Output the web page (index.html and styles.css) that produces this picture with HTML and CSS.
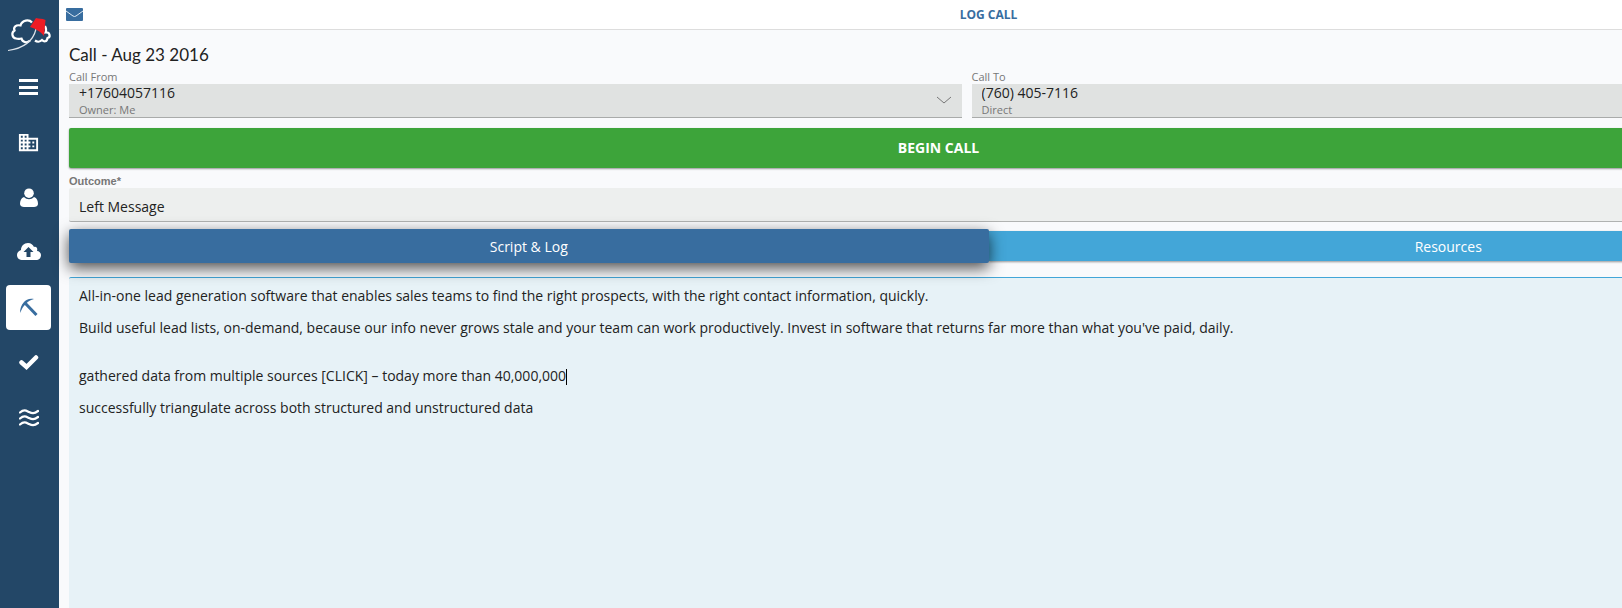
FILE: index.html
```html
<!DOCTYPE html>
<html lang="en">
<head>
    <meta charset="UTF-8">
    <meta name="viewport" content="width=device-width, initial-scale=1.0">
    <title>Log Call</title>
    <link rel="stylesheet" href="styles.css">
</head>
<body>
    <div class="app">
        <nav class="sidebar">
            <a class="logo" href="#" aria-label="Home">
                <svg width="44" height="36" viewBox="0 0 44 36">
                    <path d="M24 5.500C21 2 14 3 12.500 8.500C8 7.500 5 10 6.500 13.500C3 15.500 4 21 8 21.500C11 22.500 12 21.500 13.500 21.500C14.500 25.500 19 26.500 22 23.500" fill="none" stroke="#fff" stroke-width="2.200"/>
                    <path d="M37 9C38.500 12 38.500 13.500 37.500 15.500C42 15 43 20 39.500 21C39 25 36 25 34 23C32 25 29 25 27 23.500" fill="none" stroke="#fff" stroke-width="2.200"/>
                    <path d="M0 33.500C14 31.500 25 25 28 12" fill="none" stroke="#dfe5eb" stroke-width="1.200"/>
                    <path d="M28 1C31 2 34 1 37.500 3L36 19C32 14 28 12 22 10Z" fill="#ee1c25"/>
                </svg>
            </a>
            <a class="nav-item" href="#" aria-label="Menu">
                <svg width="19" height="18" viewBox="0 0 19 18" fill="#fff"><path d="M0 0h19v3H0zM0 7h19v3H0zM0 13h19v3H0z"/></svg>
            </a>
            <a class="nav-item" href="#" aria-label="Companies">
                <svg width="23" height="23" viewBox="0 0 24 24" fill="#fff"><path d="M12 7V3H2v18h20V7H12zM6 19H4v-2h2v2zm0-4H4v-2h2v2zm0-4H4V9h2v2zm0-4H4V5h2v2zm4 12H8v-2h2v2zm0-4H8v-2h2v2zm0-4H8V9h2v2zm0-4H8V5h2v2zm10 12h-8v-2h2v-2h-2v-2h2v-2h-2V9h8v10zm-2-8h-2v2h2v-2zm0 4h-2v2h2v-2z"/></svg>
            </a>
            <a class="nav-item" href="#" aria-label="Contacts">
                <svg width="18" height="20" viewBox="0 0 18 20" fill="#fff"><circle cx="9" cy="5.200" r="4.800"/><path d="M4 9C1 10 0 13 0 16C0 18 2 19 4 19H14C16 19 18 18 18 16C18 13 17 10 14 9C11 12 7 12 4 9Z"/></svg>
            </a>
            <a class="nav-item" href="#" aria-label="Upload">
                <svg width="24" height="19" viewBox="0 0 24 19"><path d="M6 17C2 17 0 15 0 12C0 10 1 8 4 7C4 3 7 0 11 0C14 0 16 2 17 4C19 3 21 5 20 8C22 8 24 10 24 12C24 15 22 17 19 17Z" fill="#fff"/><path d="M11.500 4L6.500 9H9.500V14H13.500V9H16.500Z" fill="#234767"/></svg>
            </a>
            <a class="nav-item active" href="#" aria-label="Prospecting">
                <svg width="20" height="20" viewBox="0 0 20 20"><path d="M15 1C10 0 7 2 5 4C2 7 1 11 1 15C3 11 4 8 7 6C9 3 12 2 15 1Z" fill="#386d9f"/><path d="M6 5L17.500 17" stroke="#386d9f" stroke-width="3"/></svg>
            </a>
            <a class="nav-item" href="#" aria-label="Tasks">
                <svg width="20" height="16" viewBox="0 0 20 16"><path d="M2.500 7.500L7.500 12L17 2.500" fill="none" stroke="#fff" stroke-width="4.500" stroke-linecap="round"/></svg>
            </a>
            <a class="nav-item" href="#" aria-label="Streams">
                <svg width="20" height="18" viewBox="0 0 20 18" fill="none" stroke="#fff" stroke-width="2.300" stroke-linecap="round"><path d="M1 3.500C5 0 7 1.500 10 3S15 5 19 2M1 9.500C5 6 7 7.500 10 9S15 11 19 8M1 15.500C5 12 7 13.500 10 15S15 17 19 14"/></svg>
            </a>
        </nav>

        <main class="main">
            <header class="topbar">
                <a class="mail" href="#" aria-label="Mail">
                    <svg width="17" height="13" viewBox="0 0 17 13"><rect width="17" height="13" rx="1" fill="#386d9f"/><path d="M0 3L7 8Q8.500 9 10 8L17 3" fill="none" stroke="#dfeaf4" stroke-width="1"/></svg>
                </a>
                <h1>LOG CALL</h1>
            </header>

            <form class="call-form">
                <h2>Call - Aug 23 2016</h2>

                <div class="numbers">
                    <div class="field">
                        <label for="call-from">Call From</label>
                        <div class="box">
                            <select id="call-from" name="call_from">
                                <option>+17604057116</option>
                            </select>
                            <small>Owner: Me</small>
                            <svg class="chevron" width="16" height="8" viewBox="0 0 16 8"><path d="M1 1L8 7L15 1" fill="none" stroke="#777" stroke-width="1"/></svg>
                        </div>
                    </div>
                    <div class="field">
                        <label for="call-to">Call To</label>
                        <div class="box">
                            <select id="call-to" name="call_to">
                                <option>(760) 405-7116</option>
                            </select>
                            <small>Direct</small>
                        </div>
                    </div>
                </div>

                <button type="button" class="begin">BEGIN CALL</button>

                <label class="outcome-label" for="outcome">Outcome*</label>
                <select class="outcome" id="outcome" name="outcome">
                    <option>Left Message</option>
                </select>

                <div class="tabs">
                    <button type="button" class="tab selected">Script &amp; Log</button>
                    <button type="button" class="tab">Resources</button>
                </div>

                <div class="script">
                    <textarea aria-label="Script &amp; Log" name="script">All-in-one lead generation software that enables sales teams to find the right prospects, with the right contact information, quickly.

Build useful lead lists, on-demand, because our info never grows stale and your team can work productively. Invest in software that returns far more than what you've paid, daily.


gathered data from multiple sources [CLICK] – today more than 40,000,000

successfully triangulate across both structured and unstructured data</textarea>
                    <span class="caret"></span>
                </div>
            </form>
        </main>
    </div>
</body>
</html>
```
FILE: styles.css
```css
* {
    box-sizing: border-box;
}
body {
    margin: 0;
    overflow: hidden;
    font-family: "Open Sans", sans-serif;
    font-size: 14px;
    color: #222;
    background-color: #f9fafc;
}
/* the workspace runs on past the right edge of the window */
.app {
    display: flex;
    width: calc(100vw + 296px);
    height: 100vh;
}
.sidebar {
    display: flex;
    flex-direction: column;
    align-items: center;
    gap: 10px;
    width: 59px;
    padding: 17px 8px 0 6px;
    background-color: #234767;
}
.logo {
    height: 38px;
    padding-left: 2px;
}
.logo svg,
.nav-item svg,
.mail svg {
    display: block;
}
.nav-item {
    display: flex;
    justify-content: center;
    align-items: center;
    width: 45px;
    height: 45px;
    border-radius: 4px;
}
.nav-item.active {
    background-color: #fff;
}
.main {
    display: flex;
    flex-direction: column;
    flex: 1;
}
.topbar {
    display: flex;
    align-items: center;
    height: 30px;
    padding: 0 7px;
    background-color: #fff;
    border-bottom: 1px solid #ddd;
}
.topbar h1 {
    flex: 1;
    margin: 0 17px 0 0;
    font-size: 12px;
    line-height: 16px;
    text-align: center;
    color: #386d9f;
}
.call-form {
    display: flex;
    flex-direction: column;
    flex: 1;
    padding: 15px 10px 0;
}
.call-form h2 {
    margin: 0 0 5px;
    font-family: Lato, sans-serif;
    font-size: 17px;
    font-weight: 400;
    line-height: 20px;
}
.numbers {
    display: flex;
    gap: 10px;
    margin: 0 44px 10px 0;
}
.field {
    flex: 1;
}
.field label {
    display: block;
    font-size: 11px;
    line-height: 14px;
    color: #777;
}
.box {
    position: relative;
    display: flex;
    flex-direction: column;
    height: 34px;
    padding: 0 10px;
    background-color: #e0e2e1;
    border-bottom: 1px solid #a9abaa;
}
select {
    appearance: none;
    padding: 0;
    border: none;
    background: none;
    font: inherit;
    color: inherit;
}
.box select {
    line-height: 18px;
    height: 18px;
}
.box small {
    font-size: 11px;
    line-height: 16px;
    color: #777;
}
.chevron {
    position: absolute;
    right: 10px;
    top: 12px;
}
.begin {
    height: 40px;
    margin-right: 100px;
    padding-bottom: 2px;
    border: none;
    border-radius: 2px;
    background-color: #3da43a;
    box-shadow: 0 1px 2px rgba(0, 0, 0, 0.4);
    font: bold 14px "Open Sans", sans-serif;
    color: #fff;
}
.outcome-label {
    margin-top: 6px;
    font: bold 11px/14px "Liberation Sans", sans-serif;
    color: #777;
}
.outcome {
    height: 34px;
    padding: 3px 10px 0;
    background-color: #edefee;
    border-bottom: 1px solid #b0b2b1;
    border-radius: 2px;
}
.tabs {
    display: flex;
    align-items: center;
    margin: 7px 0 14px;
}
.tab {
    flex: 1;
    height: 30px;
    border: none;
    background-color: #43a6d8;
    box-shadow: 0 1px 2px rgba(0, 0, 0, 0.4);
    font: 14px "Open Sans", sans-serif;
    color: #fff;
}
.tab.selected {
    z-index: 1;
    height: 34px;
    border-radius: 2px;
    background-color: #386d9f;
    box-shadow: 0 5px 15px rgba(0, 0, 0, 0.7);
}
.script {
    position: relative;
    display: flex;
    flex: 1;
}
.script textarea {
    flex: 1;
    padding: 10px;
    border: none;
    border-top: 1px solid #43a6d8;
    border-radius: 2px 2px 0 0;
    outline: none;
    resize: none;
    background-color: #e7f2f7;
    font: 14px/16px "Open Sans", sans-serif;
    color: #222;
}
/* text cursor */
.caret {
    position: absolute;
    top: 92px;
    left: 497px;
    width: 1px;
    height: 16px;
    background-color: #000;
}
```
